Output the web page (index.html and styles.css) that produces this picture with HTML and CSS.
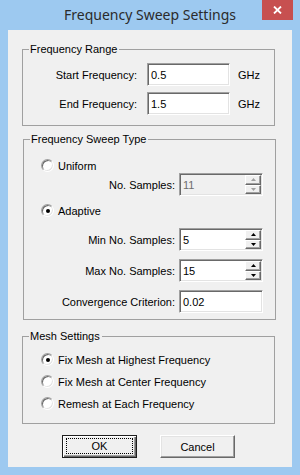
FILE: index.html
```html
<!DOCTYPE html>
<html>
<head>
<meta charset="utf-8">
<link rel="stylesheet" href="styles.css">
</head>
<body>
<div class="window">
  <div class="titlebar">
    <span class="title">Frequency Sweep Settings</span>
    <div class="close">
      <svg width="9" height="8" viewBox="0 0 9 8"><path d="M1 0.5 L8 7.5 M8 0.5 L1 7.5" stroke="#fff" stroke-width="1.8" fill="none"/></svg>
    </div>
  </div>
  <div class="client">
    <fieldset class="group g-range">
      <legend>Frequency Range</legend>
      <div class="range-grid">
        <span class="lbl">Start Frequency:</span>
        <div class="field w83"><span>0.5</span></div>
        <span class="unit">GHz</span>
        <span class="lbl">End Frequency:</span>
        <div class="field w83"><span>1.5</span></div>
        <span class="unit">GHz</span>
      </div>
    </fieldset>

    <fieldset class="group g-sweep">
      <legend>Frequency Sweep Type</legend>
      <div class="radio-row r-uniform"><span class="radio"></span><span>Uniform</span></div>
      <div class="form-row r-nosamples">
        <span class="lbl wide">No. Samples:</span>
        <div class="field w84 disabled">
          <span>11</span>
          <div class="spin">
            <div class="sbtn"><svg width="5" height="3" viewBox="0 0 5 3"><polygon points="0,3 5,3 2.5,0" fill="#a0a0a0"/></svg></div>
            <div class="sbtn"><svg width="5" height="3" viewBox="0 0 5 3"><polygon points="0,0 5,0 2.5,3" fill="#a0a0a0"/></svg></div>
          </div>
        </div>
      </div>
      <div class="radio-row r-adaptive"><span class="radio checked"></span><span>Adaptive</span></div>
      <div class="form-row r-min">
        <span class="lbl wide">Min No. Samples:</span>
        <div class="field w84">
          <span>5</span>
          <div class="spin">
            <div class="sbtn"><svg width="5" height="3" viewBox="0 0 5 3"><polygon points="0,3 5,3 2.5,0" fill="#000"/></svg></div>
            <div class="sbtn"><svg width="5" height="3" viewBox="0 0 5 3"><polygon points="0,0 5,0 2.5,3" fill="#000"/></svg></div>
          </div>
        </div>
      </div>
      <div class="form-row r-next">
        <span class="lbl wide">Max No. Samples:</span>
        <div class="field w84">
          <span>15</span>
          <div class="spin">
            <div class="sbtn"><svg width="5" height="3" viewBox="0 0 5 3"><polygon points="0,3 5,3 2.5,0" fill="#000"/></svg></div>
            <div class="sbtn"><svg width="5" height="3" viewBox="0 0 5 3"><polygon points="0,0 5,0 2.5,3" fill="#000"/></svg></div>
          </div>
        </div>
      </div>
      <div class="form-row r-next">
        <span class="lbl wide">Convergence Criterion:</span>
        <div class="field w84"><span>0.02</span></div>
      </div>
    </fieldset>

    <fieldset class="group g-mesh">
      <legend>Mesh Settings</legend>
      <div class="radio-row m-row"><span class="radio checked"></span><span>Fix Mesh at Highest Frequency</span></div>
      <div class="radio-row m-row"><span class="radio"></span><span>Fix Mesh at Center Frequency</span></div>
      <div class="radio-row m-row"><span class="radio"></span><span>Remesh at Each Frequency</span></div>
    </fieldset>

    <div class="buttons">
      <div class="btn default"><span class="focus">OK</span></div>
      <div class="btn"><span class="face">Cancel</span></div>
    </div>
  </div>
</div>
</body>
</html>
```

FILE: styles.css
```css
* { box-sizing: border-box; }

body {
  margin: 0;
  font-family: "Liberation Sans", Arial, sans-serif;
  font-size: 11px;
  color: #000;
}

.window {
  position: relative;
  width: 300px;
  height: 475px;
  background: #9dc9f0;
  padding: 0 8px;
  display: flex;
  flex-direction: column;
}

.titlebar {
  height: 30px;
  padding-top: 5px;
  display: flex;
  justify-content: center;
}

.title {
  font-family: "Noto Sans", sans-serif;
  font-size: 14px;
  line-height: 19px;
  color: #2b2b2b;
}

.close {
  position: absolute;
  top: 0;
  right: 7px;
  width: 31px;
  height: 20px;
  background: #c75050;
  display: flex;
  align-items: center;
  justify-content: center;
}

.client {
  background: #f0f0f0;
  height: 437px;
  padding: 13px 17px 0 14px;
  display: flex;
  flex-direction: column;
}

.group {
  margin: 0;
  padding: 0;
  border: 1px solid #a0a0a0;
  width: 253px;
  min-width: 0;
}

.group legend {
  margin-left: 6px;
  padding: 0 2px 0 1px;
  line-height: 13px;
}

.g-range { padding: 7px 0 10px 0; }

.range-grid {
  display: grid;
  grid-template-columns: 114px 93px auto;
  row-gap: 6px;
  align-items: center;
}

.lbl { text-align: right; }
.range-grid .field { justify-self: end; }
.unit { padding-left: 8px; }

.field {
  height: 23px;
  background: #fff;
  border: 1px solid;
  border-color: #a0a0a0 #fff #fff #a0a0a0;
  box-shadow: inset 1px 1px 0 #696969, inset -1px -1px 0 #e3e3e3;
  padding: 1px 1px 1px 3px;
  display: flex;
  align-items: center;
}
.w83 { width: 83px; }
.w84 { width: 84px; }
.field.disabled { background: #f0f0f0; color: #6d6d6d; }

.spin {
  margin-left: auto;
  width: 16px;
  align-self: stretch;
  display: flex;
  flex-direction: column;
}

.sbtn {
  flex: 1;
  background: #f0f0f0;
  border: 1px solid;
  border-color: #fff #696969 #696969 #fff;
  box-shadow: inset -1px -1px 0 #a0a0a0;
  display: flex;
  align-items: center;
  justify-content: center;
}
.sbtn svg { display: block; }

.g-sweep {
  margin-top: 7px;
  margin-left: 1px;
  padding: 13px 0 6px 0;
  display: flex;
  flex-direction: column;
}

.radio-row {
  display: flex;
  align-items: center;
  height: 13px;
  gap: 4px;
  margin-left: 17px;
}

.radio {
  width: 13px;
  height: 13px;
  border-radius: 50%;
  background: #fff;
  border: 1px solid;
  border-color: #a0a0a0 #fff #fff #a0a0a0;
  box-shadow: inset 1px 1px 0 #696969, inset -1px -1px 0 #e3e3e3;
  display: flex;
  align-items: center;
  justify-content: center;
}
.radio.checked::after {
  content: "";
  width: 4px;
  height: 4px;
  border-radius: 50%;
  background: #000;
}

.form-row {
  display: flex;
  align-items: center;
  height: 23px;
}
.lbl.wide { width: 151px; margin-right: 4px; }

.r-nosamples { margin-top: 1px; }
.r-adaptive { margin-top: 8px; }
.r-min { margin-top: 11px; }
.r-next { margin-top: 8px; }

.g-mesh {
  margin-top: 10px;
  padding: 10px 0 13px 0;
  display: flex;
  flex-direction: column;
  gap: 9px;
}
.m-row { margin-left: 18px; }

.buttons {
  margin-top: 11px;
  margin-left: 40px;
  display: flex;
  gap: 23px;
}

.btn {
  width: 75px;
  height: 23px;
  background: #f0f0f0;
  border: 1px solid;
  border-color: #fff #696969 #696969 #fff;
  box-shadow: inset -1px -1px 0 #a0a0a0, inset 1px 1px 0 #e3e3e3;
  display: flex;
  padding: 2px;
}
.btn.default {
  border: 1px solid #1e1e1e;
  box-shadow: inset 1px 1px 0 #fff, inset -1px -1px 0 #696969, inset -2px -2px 0 #a0a0a0;
  padding: 2px 3px 3px 3px;
}
.focus, .face {
  flex: 1;
  display: flex;
  align-items: center;
  justify-content: center;
}
.focus { border: 1px dotted #000; }
```
